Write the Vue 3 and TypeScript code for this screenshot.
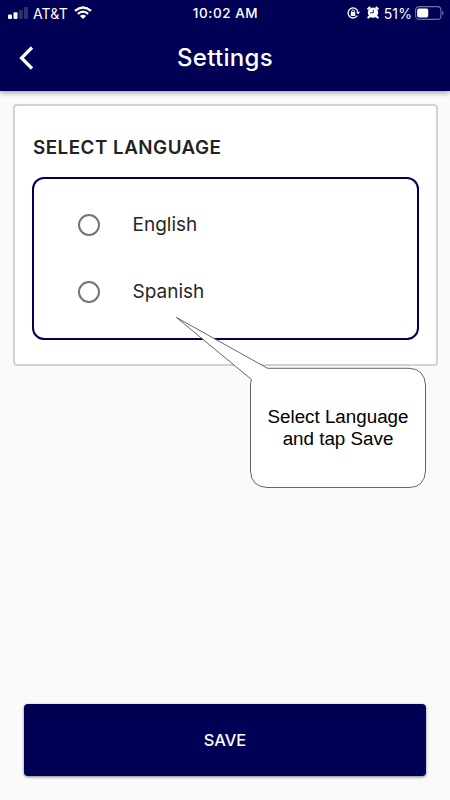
<script setup lang="ts">
import { ref } from 'vue'

const languages: string[] = ['English', 'Spanish']
const selected = ref<string | null>(null)
</script>

<template>
  <div class="screen">
    <header class="header">
      <div class="status">
        <div class="status-left">
          <svg class="signal" width="20" height="12" viewBox="0 0 20 12">
            <rect x="0" y="7.5" width="4" height="4.5" rx="1" fill="#fff" />
            <rect x="5.5" y="5.2" width="4" height="6.8" rx="1" fill="#fff" />
            <rect x="10.8" y="2.8" width="4" height="9.2" rx="1" fill="#30306f" />
            <rect x="16" y="0" width="4" height="12" rx="1" fill="#30306f" />
          </svg>
          <span class="carrier">AT&amp;T</span>
          <svg class="wifi" width="18" height="13" viewBox="0 0 18 13" fill="none" stroke="#fff">
            <path d="M1 4.8Q9 -2 17 4.8" stroke-width="2.4" />
            <path d="M3.8 7.9Q9 3.3 14.2 7.9" stroke-width="2.2" />
            <path d="M9 13L5.9 10Q9 7.6 12.1 10Z" fill="#fff" stroke="none" />
          </svg>
        </div>
        <span class="time">10:02 AM</span>
        <div class="status-right">
          <svg class="lock" width="13" height="12" viewBox="0 0 13 12">
            <path d="M10.3 8.7A5 5 0 1 1 10.9 4.6" fill="none" stroke="#fff" stroke-width="1.3" />
            <path d="M9.1 4.7H13L11.1 7.5Z" fill="#fff" />
            <rect x="3.8" y="5.1" width="4.5" height="3.8" rx=".5" fill="#fff" />
            <path d="M4.8 5.5V4.2a1.25 1.25 0 0 1 2.5 0v1.3" fill="none" stroke="#fff" stroke-width="1" />
          </svg>
          <svg class="alarm" width="12" height="13" viewBox="0 0 12 13">
            <circle cx="6" cy="6.6" r="5.2" fill="#fff" />
            <path d="M1.2 2.7L2.6 1.4M10.8 2.7L9.4 1.4M2.5 10.5L1.3 11.6M9.5 10.5L10.7 11.6" stroke="#fff" stroke-width="2" stroke-linecap="round" />
            <path d="M6.3 3.6V6.8H3.2" fill="none" stroke="#000054" stroke-width=".9" />
          </svg>
          <span class="percent">51%</span>
          <svg class="battery" width="29" height="14" viewBox="0 0 29 14">
            <rect x=".6" y=".6" width="25.3" height="12.8" rx="3.5" fill="none" stroke="#73739d" stroke-width="1.1" />
            <rect x="2.2" y="2.4" width="11" height="9.2" rx="1.8" fill="#fff" />
            <path d="M27.2 5v4.2c1.8-.5 1.8-3.7 0-4.2Z" fill="#73739d" />
          </svg>
        </div>
      </div>
      <div class="toolbar">
        <button class="back" aria-label="Back">
          <svg width="16" height="24" viewBox="0 0 16 24">
            <path d="M13 1.5L2.5 12L13 22.5" fill="none" stroke="#fff" stroke-width="3.2" />
          </svg>
        </button>
        <h1 class="title">Settings</h1>
      </div>
    </header>

    <main class="content">
      <section class="card">
        <h2 class="heading">SELECT LANGUAGE</h2>
        <div class="options">
          <label v-for="language in languages" :key="language" class="option">
            <input v-model="selected" class="radio" type="radio" name="language" :value="language" />
            <span>{{ language }}</span>
          </label>
        </div>
      </section>
    </main>

    <button class="save">SAVE</button>

    <div class="callout">
      <svg class="bubble" width="252" height="174" viewBox="0 0 252 174">
        <path
          d="M1.5 1.5L92.5 52.3H234Q249.5 52.8 250.5 69V155Q249.5 171.5 234 171.5H92Q76 170.5 75.5 155V69Q75.5 66 76.5 63.5Z"
          fill="#fff"
          stroke="#555"
          stroke-width=".9"
        />
      </svg>
      <p class="callout-text">Select Language<br />and tap Save</p>
    </div>
  </div>
</template>

<style>
body {
  margin: 0;
  background: #fafafa;
}
</style>

<style scoped>
.screen {
  position: relative;
  box-sizing: border-box;
  display: flex;
  flex-direction: column;
  height: 800px;
  overflow: hidden;
  padding-bottom: 24px;
  background: #fafafa;
  font-family: Inter, 'Liberation Sans', sans-serif;
}

.header {
  flex: none;
  height: 91px;
  background: #000054;
  color: #fff;
  box-shadow: 0 1px 6px rgba(0, 0, 0, 0.45);
}

.status {
  display: grid;
  grid-template-columns: 1fr auto 1fr;
  align-items: center;
  height: 25px;
  padding: 0 7px 0 8px;
  font-size: 13.5px;
  line-height: 25px;
}

.status-left,
.status-right {
  display: flex;
  align-items: center;
}

.status-right {
  justify-content: flex-end;
}

.carrier {
  margin: 0 6px 0 5px;
  font-size: 14px;
  letter-spacing: 0.15px;
}

.wifi {
  margin-top: -1px;
}

.time {
  padding-top: 1px;
  font-weight: 500;
  letter-spacing: 0.55px;
}

.lock,
.alarm {
  margin-top: -1px;
}

.alarm {
  margin-left: 7px;
}

.percent {
  margin: 0 3px 0 5px;
  font-size: 14px;
  letter-spacing: 0.1px;
}

.battery {
  margin-top: -1px;
  margin-right: -1px;
}

.toolbar {
  display: grid;
  grid-template-columns: 60px 1fr 60px;
  align-items: center;
  height: 66px;
}

.back {
  display: flex;
  padding: 0 0 0 19px;
  border: 0;
  background: none;
}

.title {
  margin: 0;
  font-size: 24px;
  font-weight: 500;
  line-height: 66px;
  letter-spacing: 0.3px;
  text-align: center;
}

.content {
  flex: 1;
  padding: 13px 12px 0 13px;
}

.card {
  box-sizing: border-box;
  height: 262px;
  padding: 28px 17px 0;
  border: 2px solid #d2d2d2;
  border-radius: 4px;
  background: #fff;
}

.heading {
  margin: 0 0 15px 1px;
  color: #222;
  font-size: 18.8px;
  font-weight: 600;
  line-height: 28px;
  letter-spacing: 0.5px;
}

.options {
  box-sizing: border-box;
  display: flex;
  flex-direction: column;
  height: 163px;
  padding: 12px 0 0 44px;
  border: 2px solid #000054;
  border-radius: 12px;
}

.option {
  display: flex;
  align-items: center;
  gap: 32.5px;
  height: 67px;
  color: #272727;
  font-size: 19px;
}

.radio {
  appearance: none;
  box-sizing: border-box;
  width: 22px;
  height: 22px;
  margin: 0;
  border: 2px solid #757575;
  border-radius: 50%;
}

.radio:checked {
  background: radial-gradient(circle, #000054 5px, transparent 6px);
}

.save {
  flex: none;
  height: 72px;
  margin: 0 24px;
  padding: 0;
  border: 0;
  border-radius: 4px;
  background: #000054;
  box-shadow: 0 1px 3px rgba(0, 0, 0, 0.5);
  color: #fff;
  font: 500 16.4px/72px Inter, 'Liberation Sans', sans-serif;
}

.callout {
  position: absolute;
  top: 316px;
  left: 175px;
  width: 252px;
  height: 174px;
}

.bubble {
  display: block;
}

.callout-text {
  position: absolute;
  top: 90px;
  left: 75px;
  width: 176px;
  margin: 0;
  color: #000;
  font: 18.8px/22px 'Liberation Sans', Arial, sans-serif;
  text-align: center;
}
</style>
